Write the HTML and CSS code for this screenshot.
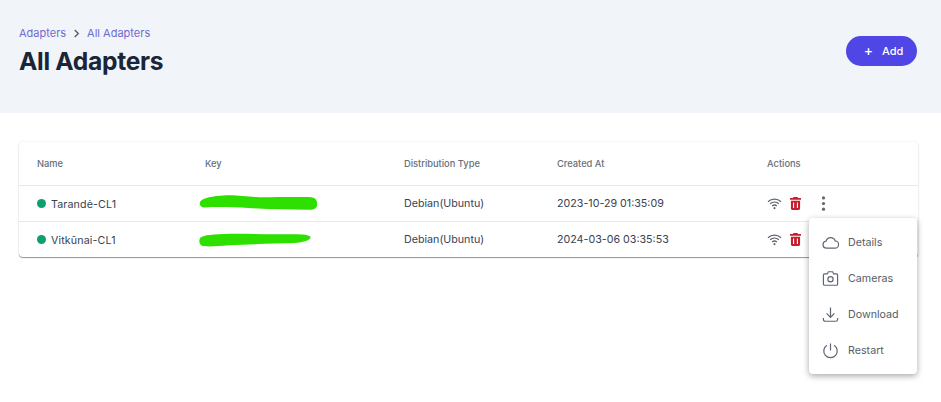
FILE: index.html
```html
<!DOCTYPE html>
<html lang="en">
<head>
    <meta charset="UTF-8">
    <title>All Adapters</title>
    <link rel="stylesheet" href="styles.css">
</head>
<body>
    <header class="page-header">
        <div>
            <nav class="breadcrumb">
                <span>Adapters</span>
                <svg class="crumb-arrow" viewBox="0 0 10 10"><path d="M3 1l4 4-4 4" /></svg>
                <span>All Adapters</span>
            </nav>
            <h1>All Adapters</h1>
        </div>
        <button class="add-btn"><span class="plus">+</span>Add</button>
    </header>

    <main class="content">
        <div class="card">
            <table>
                <thead>
                    <tr>
                        <th class="col-name">Name</th>
                        <th class="col-key">Key</th>
                        <th class="col-dist">Distribution Type</th>
                        <th class="col-date">Created At</th>
                        <th>Actions</th>
                    </tr>
                </thead>
                <tbody>
                    <tr>
                        <td class="name-cell"><span class="dot"></span>Tarandė-CL1</td>
                        <td class="key-cell">
                            <svg class="scribble" width="119" height="16" viewBox="0 0 120 18" preserveAspectRatio="none"><path d="M1 8C3 3 15 1 25 .5C40 0 47 2 60 2.500C80 2.500 100 2 113 2.500C118 3 119.500 7 119 10C119.500 15 116 17 110 16.500C90 16 70 16.500 50 14.500C35 13.500 15 13 6 14C2 14.500 0 11 1 8Z" /></svg>
                        </td>
                        <td>Debian(Ubuntu)</td>
                        <td>2023-10-29 01:35:09</td>
                        <td>
                            <div class="actions">
                                <svg class="wifi" viewBox="0 0 16 14"><path d="M1 5C5 1.500 11 1.500 15 5M3.300 7.300C6 5 10 5 12.700 7.300M5.500 9.600C7 8.400 9 8.400 10.500 9.600" /><circle cx="8" cy="12" r="1.100" /></svg>
                                <svg class="trash" viewBox="0 0 12 14"><path d="M4 0h4l1 1h3v2H0V1h3zM1 4h10v8.500A1.500 1.500 0 0 1 9.500 14h-7A1.500 1.500 0 0 1 1 12.500zM3.300 6v6h1.200V6zm4.200 0v6h1.200V6z" /></svg>
                                <svg class="dots" viewBox="0 0 4 16"><circle cx="2" cy="2" r="1.700" /><circle cx="2" cy="8" r="1.700" /><circle cx="2" cy="14" r="1.700" /></svg>
                            </div>
                        </td>
                    </tr>
                    <tr>
                        <td class="name-cell"><span class="dot"></span>Vitkūnai-CL1</td>
                        <td class="key-cell">
                            <svg class="scribble scribble-low" width="112" height="14" viewBox="0 0 112 16" preserveAspectRatio="none"><path d="M1 6C2 3 10 1.500 25 1C45 .5 70 1.500 90 1.500C100 1 110 1.500 111.500 4.500C112 8 106 10.500 95 11.500C75 12.500 50 12.500 30 14C15 15.500 5 16 2 14C0 12 0 8 1 6Z" /></svg>
                        </td>
                        <td>Debian(Ubuntu)</td>
                        <td>2024-03-06 03:35:53</td>
                        <td>
                            <div class="actions">
                                <svg class="wifi" viewBox="0 0 16 14"><path d="M1 5C5 1.500 11 1.500 15 5M3.300 7.300C6 5 10 5 12.700 7.300M5.500 9.600C7 8.400 9 8.400 10.500 9.600" /><circle cx="8" cy="12" r="1.100" /></svg>
                                <svg class="trash" viewBox="0 0 12 14"><path d="M4 0h4l1 1h3v2H0V1h3zM1 4h10v8.500A1.500 1.500 0 0 1 9.500 14h-7A1.500 1.500 0 0 1 1 12.500zM3.300 6v6h1.200V6zm4.200 0v6h1.200V6z" /></svg>
                            </div>
                        </td>
                    </tr>
                </tbody>
            </table>
        </div>

        <ul class="menu">
            <li>
                <svg viewBox="0 0 24 24"><path d="M6.500 20a5 5 0 0 1-.7-9.950A6.700 6.700 0 0 1 18.600 9.800a5.100 5.100 0 0 1-.6 10.200z" /></svg>
                Details
            </li>
            <li>
                <svg viewBox="0 0 24 24"><path d="M3.500 5.500h4L9 2.500h6l1.500 3h4a1.500 1.500 0 0 1 1.500 1.500v13a1.500 1.500 0 0 1-1.500 1.500h-17A1.500 1.500 0 0 1 2 20V7a1.500 1.500 0 0 1 1.500-1.500z" /><circle cx="12" cy="13" r="3.700" /></svg>
                Cameras
            </li>
            <li>
                <svg viewBox="0 0 24 24"><path d="M12 2v14M6.500 10.500l5.500 5.500 5.500-5.500M2 17v2a2.500 2.500 0 0 0 2.500 2.500h15A2.500 2.500 0 0 0 22 19v-2" /></svg>
                Download
            </li>
            <li>
                <svg viewBox="0 0 24 24"><path d="M12 2v10M7 4.500a9.500 9.500 0 1 0 10 0" /></svg>
                Restart
            </li>
        </ul>
    </main>
</body>
</html>
```

FILE: styles.css
```css
* {
    box-sizing: border-box;
}

body {
    margin: 0;
    min-height: 402px;
    background: #fff;
    color: #2b3440;
    font-family: "Inter", "Noto Sans", sans-serif;
    font-size: 11px;
}

.page-header {
    height: 113px;
    padding: 26px 23px 0 19px;
    background: #f1f4f9;
    display: flex;
    justify-content: space-between;
    align-items: flex-start;
}

.breadcrumb {
    display: flex;
    align-items: center;
    gap: 6px;
    color: #6f6bd0;
    font-size: 11px;
    line-height: 14px;
}

.crumb-arrow {
    width: 9px;
    height: 9px;
    fill: none;
    stroke: #555c68;
    stroke-width: 1.500;
}

h1 {
    margin: 5px 0 0;
    color: #1a2538;
    font-size: 24.600px;
    line-height: 32px;
    font-weight: 700;
    letter-spacing: -0.300px;
}

.add-btn {
    margin-top: 10px;
    margin-right: 1px;
    width: 71px;
    height: 30px;
    padding: 0 0 0 4px;
    border: 0;
    border-radius: 15px;
    background: #4f46e5;
    color: #fff;
    font-family: inherit;
    font-size: 11px;
    font-weight: 500;
    display: flex;
    align-items: center;
    justify-content: center;
    gap: 9px;
}

.plus {
    font-size: 14px;
    line-height: 14px;
}

.content {
    position: relative;
    padding: 29px 23px 0 19px;
}

.card {
    background: #fff;
    border-radius: 4px;
    box-shadow: 0 1px 1px rgba(0, 0, 0, 0.4), 0 0 3px rgba(0, 0, 0, 0.08);
}

table {
    width: 100%;
    border-collapse: collapse;
    table-layout: fixed;
}

th {
    height: 43px;
    padding: 0 0 0 18px;
    text-align: left;
    color: #66707d;
    font-size: 9.300px;
    font-weight: 500;
}

.col-name {
    width: 168px;
}

.col-key {
    width: 199px;
}

.col-dist {
    width: 153px;
}

.col-date {
    width: 210px;
}

td {
    height: 36px;
    padding: 1px 0 0 18px;
    border-top: 1px solid #e6e8ec;
    color: #3a4250;
    font-size: 10.700px;
}

.name-cell {
    letter-spacing: 0.120px;
    padding-top: 2px;
}

.dot {
    display: inline-block;
    width: 9px;
    height: 9px;
    margin-right: 5px;
    border-radius: 50%;
    background: #0f9f6e;
}

.key-cell {
    padding: 0 0 0 13px;
}

.scribble {
    display: block;
    margin-left: -1px;
    fill: #2de000;
}

.scribble-low {
    margin-top: 1px;
}

.actions {
    display: flex;
    align-items: center;
}

.wifi {
    width: 15px;
    height: 13px;
    fill: #5f6670;
    stroke: none;
}

.wifi path {
    fill: none;
    stroke: #5f6670;
    stroke-width: 1.400;
}

.trash {
    width: 11px;
    height: 13px;
    margin-left: 8px;
    fill: #c81e2c;
}

.dots {
    width: 5px;
    height: 15px;
    margin-left: 20px;
    fill: #5f6670;
}

.menu {
    position: absolute;
    top: 105px;
    left: 809px;
    width: 108px;
    margin: 0;
    padding: 6px 0;
    list-style: none;
    background: #fff;
    border-radius: 4px;
    box-shadow: 0 2px 6px rgba(0, 0, 0, 0.35);
}

.menu li {
    height: 36px;
    padding-left: 13px;
    display: flex;
    align-items: center;
    gap: 9px;
    color: #565d68;
    font-size: 10.700px;
}

.menu svg {
    width: 17px;
    height: 17px;
    fill: none;
    stroke: #5f6670;
    stroke-width: 1.700;
}
```
